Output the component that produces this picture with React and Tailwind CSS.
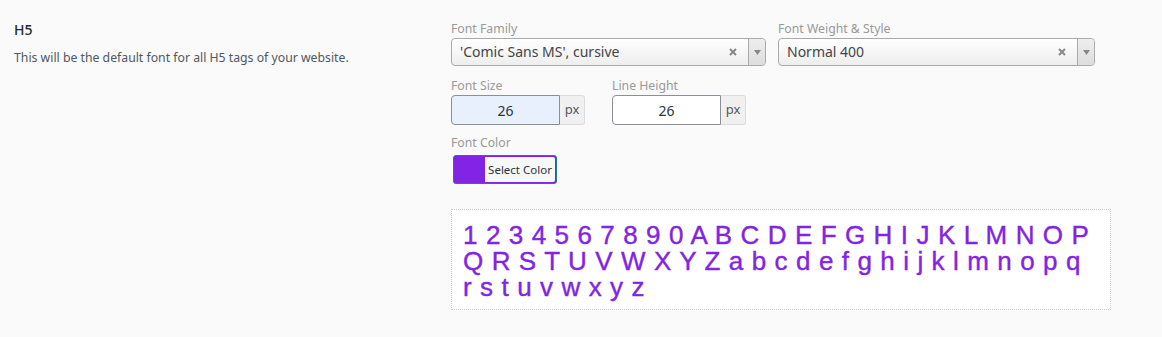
import React from 'react';

const SelectBox = ({ value }) => (
  <div className="flex h-[28px] items-stretch rounded-[4px] border border-[#aaaaaa] bg-gradient-to-b from-white to-[#eeeeee] text-[14px] text-[#444444]">
    <span className="flex-1 truncate pl-[8px] leading-[26px]">{value}</span>
    <span className="flex w-[30px] items-center justify-center">
      <svg width="8" height="8" viewBox="0 0 8 8"><path d="M1 1l6 6M7 1L1 7" stroke="#888888" strokeWidth="2" /></svg>
    </span>
    <span className="flex w-[17px] items-center justify-center rounded-r-[4px] border-l border-[#aaaaaa] bg-gradient-to-b from-[#eeeeee] to-[#dddddd]">
      <svg width="7" height="5" viewBox="0 0 7 5"><path d="M0 0h7L3.5 5z" fill="#888888" /></svg>
    </span>
  </div>
);

const NumberBox = ({ value, active }) => (
  <div className="flex h-[30px] w-[134px]">
    <input
      readOnly
      value={value}
      className={`h-full w-[109px] rounded-l-[4px] border border-[#8c8f94] text-center text-[14px] text-[#2c3338] outline-none ${active ? 'bg-[#e8f0fe]' : 'bg-white'}`}
    />
    <span className="flex h-full w-[25px] items-center justify-center rounded-r-[3px] border border-l-0 border-[#dcdcde] bg-[#f0f0f1] text-[13px] text-[#50575e]">px</span>
  </div>
);

const chars = '1234567890ABCDEFGHIJKLMNOPQRSTUVWXYZabcdefghijklmnopqrstuvwxyz'.split('').join(' ');

export default function App() {
  return (
    <div className="min-h-[337px] w-full bg-[#fafafa] font-['Segoe_UI','Noto_Sans',sans-serif]">
      <div className="flex pt-[20px]">
        <div className="w-[451px] shrink-0 pl-[14px]">
          <h5 className="text-[14px] font-medium leading-[20px] text-[#23282d]">H5</h5>
          <p className="mt-[9px] text-[12.25px] leading-[18px] text-[#50575e]">This will be the default font for all H5 tags of your website.</p>
        </div>
        <div className="w-[660px]">
          <div className="flex gap-[12px]">
            <div className="w-[315px]">
              <label className="block text-[12.25px] leading-[18px] text-[#999999]">Font Family</label>
              <SelectBox value="'Comic Sans MS', cursive" />
            </div>
            <div className="w-[317px]">
              <label className="block text-[12.25px] leading-[18px] text-[#999999]">Font Weight &amp; Style</label>
              <SelectBox value="Normal 400" />
            </div>
          </div>
          <div className="mt-[10px] flex gap-[27px]">
            <div>
              <label className="block text-[12.25px] leading-[19px] text-[#999999]">Font Size</label>
              <NumberBox value="26" active />
            </div>
            <div>
              <label className="block text-[12.25px] leading-[19px] text-[#999999]">Line Height</label>
              <NumberBox value="26" />
            </div>
          </div>
          <div className="mt-[8px]">
            <label className="block text-[12.25px] leading-[19px] text-[#999999]">Font Color</label>
            <button className="ml-[2px] mt-[3px] flex h-[29px] w-[104px] overflow-hidden rounded-[3px] border border-[#2271b1] bg-[#8224e3] p-[1px]">
              <span className="w-[30px] bg-[#8224e3]" />
              <span className="flex flex-1 items-center justify-center rounded-r-[2px] bg-[#f6f7f7] text-[11.5px] text-[#2c3338]">Select Color</span>
            </button>
          </div>
          <div className="mt-[25px] w-[660px] border border-dotted border-[#cccccc] bg-white pl-[11px] pr-[15px] pt-[12px] pb-[9px]">
            <p className="font-['Comic_Sans_MS','Liberation_Sans',cursive] text-[26px] leading-[26px] tracking-[0.6px] text-[#8224e3] [-webkit-text-stroke:0.4px_#8224e3]">{chars}</p>
          </div>
        </div>
      </div>
    </div>
  );
}
